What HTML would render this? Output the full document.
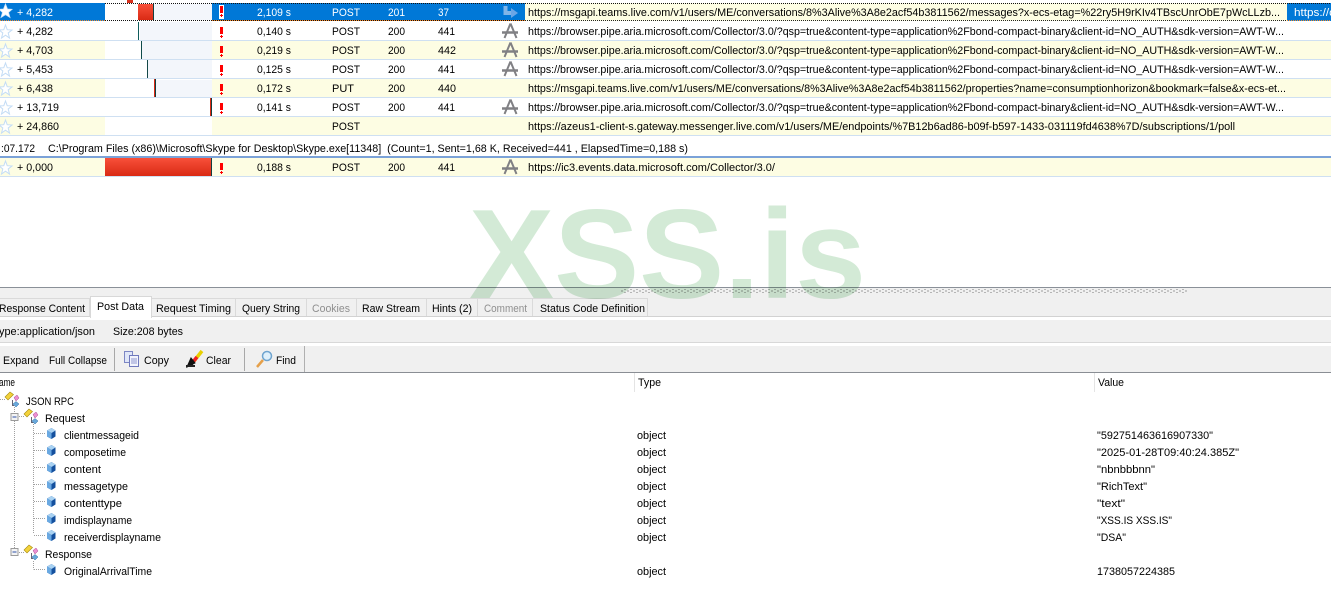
<!DOCTYPE html>
<html><head><meta charset="utf-8"><style>
html,body{margin:0;padding:0;background:#fff;width:1331px;height:603px;overflow:hidden}
svg{display:block;position:absolute;left:0;top:0}
text{font-family:"Liberation Sans",sans-serif;font-size:11px;fill:#000;white-space:pre}
.w text,text.w{fill:#fff}
.g{fill:#8f8f8f}
</style></head><body>
<svg width="1331" height="603" viewBox="0 0 1331 603" xmlns="http://www.w3.org/2000/svg">
<defs>
<linearGradient id="r" x1="0" y1="0" x2="0" y2="1"><stop offset="0" stop-color="#f8503a"/><stop offset="1" stop-color="#d92a14"/></linearGradient>
<polygon id="star" points="5.5,3 7.2,7.7 12,8 8.2,11 9.5,16 5.5,13.2 1.5,16 2.8,11 -1,8 3.8,7.7" fill="#fff" stroke="#c3dcf5" stroke-width="1"/>
<g id="ex"><rect x="220" y="5" width="3" height="7" fill="#f00"/><rect x="221" y="13" width="1" height="3" fill="#f00"/><rect x="220" y="14" width="3" height="1" fill="#f00"/></g>
<g id="a" fill="none" stroke="#808084"><path d="M510.500 1.500 L504.500 16" stroke-width="2"/><path d="M510.500 1.500 L516.500 16" stroke-width="2"/><path d="M502 10.500H518" stroke-width="2.500"/></g>
<g id="cube"><polygon points="51.500,0 55.500,2.500 55.500,8.500 51.500,11 47,8.500 47,2.500" fill="#14509e"/><polygon points="51.500,0 55.500,2.500 51.500,5 47,2.500" fill="#a9d2f2"/><polygon points="47,2.500 51.500,5 51.500,11 47,8.500" fill="#6aa9e2"/></g>
<g id="node"><path d="M7.500 8 V13.500 H9" fill="none" stroke="#667" stroke-width="1"/><polygon points="0,5 5,0 8.500,2.500 3,8" fill="#f3d23a" stroke="#a58a10" stroke-width=".6"/><polygon points="9,5.500 12,3 14,6 11,9" fill="#ec8fd2" stroke="#a84e92" stroke-width=".5"/><polygon points="8,12 11,9.500 14,12 11,15" fill="#69a9dc" stroke="#2c6ca5" stroke-width=".5"/></g>
<g id="minus"><rect x=".5" y=".5" width="7" height="7" fill="#f4f4f4" stroke="#9a9a9a"/><rect x="2" y="3.500" width="4" height="1" fill="#2b4fa8"/></g>
<pattern id="dither" width="6" height="4" patternUnits="userSpaceOnUse"><rect width="6" height="4" fill="#f0f0f0"/><rect x="0" y="0" width="2" height="2" fill="#b5b5b5"/><rect x="3" y="2" width="2" height="2" fill="#c6c6c6"/></pattern>
</defs>

<!-- top rows -->
<rect x="127" y="0" width="6" height="3" fill="#d9301c"/>
<rect x="0" y="3" width="105" height="18" fill="#0078d7"/><rect x="212" y="3" width="313" height="18" fill="#0078d7"/>
<rect x="105" y="3" width="107" height="18" fill="#fff"/>
<rect x="154" y="4" width="58" height="16" fill="#f3f6fb"/>
<rect x="138" y="4" width="15" height="16" fill="url(#r)"/><rect x="153" y="4" width="1" height="16" fill="#143f3f"/>
<rect x="525" y="3" width="762" height="18" fill="#fdfde3"/>
<rect x="1287" y="3" width="44" height="18" fill="#0078d7"/>
<path d="M105 3.500H1331M105 20.500H525" stroke="#111" stroke-width="1" stroke-dasharray="1 1"/>
<path d="M525 20.500H1287" stroke="#222" stroke-width="1" stroke-dasharray="1 1"/>
<path d="M0 20.500H105M212 20.500H525M1287 20.500H1331" stroke="#f58a2a" stroke-width="1" stroke-dasharray="1 1"/>

<rect x="0" y="41" width="1331" height="18" fill="#fdfde3"/><rect x="0" y="79" width="1331" height="18" fill="#fdfde3"/><rect x="0" y="117" width="1331" height="18" fill="#fdfde3"/><rect x="0" y="158" width="1331" height="18" fill="#fdfde3"/>
<rect x="105" y="41" width="107" height="18" fill="#fff"/><rect x="105" y="79" width="107" height="18" fill="#fff"/><rect x="105" y="117" width="107" height="18" fill="#fff"/>
<rect x="140" y="22" width="72" height="18" fill="#f3f6fb"/><rect x="142" y="41" width="70" height="18" fill="#f3f6fb"/><rect x="148" y="60" width="64" height="18" fill="#f3f6fb"/><rect x="156" y="80" width="56" height="17" fill="#f3f6fb"/>
<rect x="138" y="22" width="1" height="18" fill="#0f5c5c"/><rect x="141" y="41" width="1" height="18" fill="#0f4c4c"/><rect x="147" y="60" width="1" height="18" fill="#144848"/>
<rect x="154" y="79" width="1" height="18" fill="#d92a14"/><rect x="155" y="79" width="1" height="18" fill="#143f3f"/>
<rect x="210" y="98" width="1" height="18" fill="#d92a14"/><rect x="211" y="98" width="1" height="18" fill="#143f3f"/>
<rect x="105" y="158" width="106" height="18" fill="url(#r)"/><rect x="211" y="158" width="1" height="18" fill="#143f3f"/>

<path d="M0 40.500H1331M0 59.500H1331M0 78.500H1331M0 97.500H1331M0 116.500H1331M0 135.500H1331M0 176.500H1331" stroke="#cfe0f2" stroke-width="1"/>
<rect x="0" y="156" width="1331" height="2" fill="#7ba2d8"/>

<!-- stars -->
<g transform="translate(0,3)"><polygon points="5.500,1 7.500,6 12,6.300 8.500,9.500 10,14.500 5.500,11.700 1,14.500 2.500,9.500 -1,6.300 3.500,6" fill="#fff" stroke="#cfe6fb" stroke-width=".8"/></g>
<use href="#star" y="22"/><use href="#star" y="41"/><use href="#star" y="60"/><use href="#star" y="79"/><use href="#star" y="98"/><use href="#star" y="117"/><use href="#star" y="158"/>

<!-- exclamation -->
<rect x="219" y="5" width="5" height="14" fill="#fff"/><use href="#ex" y="1"/>
<use href="#ex" y="22"/><use href="#ex" y="41"/><use href="#ex" y="60"/><use href="#ex" y="79"/><use href="#ex" y="98"/><use href="#ex" y="158"/>

<!-- row icons -->
<g fill="none"><path d="M505.500 6 V13 H512" stroke="#7fb5e8" stroke-width="4"/><polygon points="511,8 518,13 511,18" fill="#6aa6e6"/></g>
<use href="#a" y="22"/><use href="#a" y="41"/><use href="#a" y="60"/><use href="#a" y="98"/><use href="#a" y="158"/>

<!-- row 1 text -->
<g class="w">
<text x="17" y="16" textLength="36" lengthAdjust="spacingAndGlyphs">+ 4,282</text>
<text x="257" y="16" textLength="34" lengthAdjust="spacingAndGlyphs">2,109 s</text>
<text x="332" y="16" textLength="28" lengthAdjust="spacingAndGlyphs">POST</text>
<text x="388" y="16" textLength="17" lengthAdjust="spacingAndGlyphs">201</text>
<text x="438" y="16" textLength="11" lengthAdjust="spacingAndGlyphs">37</text>
<text x="1294" y="16" textLength="41" lengthAdjust="spacingAndGlyphs">https://c</text>
</g>
<text x="528" y="16" textLength="752" lengthAdjust="spacingAndGlyphs">https://msgapi.teams.live.com/v1/users/ME/conversations/8%3Alive%3A8e2acf54b3811562/messages?x-ecs-etag=%22ry5H9rKIv4TBscUnrObE7pWcLLzb...</text>

<!-- row 2 -->
<text x="17" y="35" textLength="36" lengthAdjust="spacingAndGlyphs">+ 4,282</text><text x="257" y="35" textLength="34" lengthAdjust="spacingAndGlyphs">0,140 s</text><text x="332" y="35" textLength="28" lengthAdjust="spacingAndGlyphs">POST</text><text x="388" y="35" textLength="17" lengthAdjust="spacingAndGlyphs">200</text><text x="438" y="35" textLength="17" lengthAdjust="spacingAndGlyphs">441</text>
<text x="528" y="35" textLength="756" lengthAdjust="spacingAndGlyphs">https://browser.pipe.aria.microsoft.com/Collector/3.0/?qsp=true&amp;content-type=application%2Fbond-compact-binary&amp;client-id=NO_AUTH&amp;sdk-version=AWT-W...</text>
<!-- row 3 -->
<text x="17" y="54" textLength="36" lengthAdjust="spacingAndGlyphs">+ 4,703</text><text x="257" y="54" textLength="34" lengthAdjust="spacingAndGlyphs">0,219 s</text><text x="332" y="54" textLength="28" lengthAdjust="spacingAndGlyphs">POST</text><text x="388" y="54" textLength="17" lengthAdjust="spacingAndGlyphs">200</text><text x="438" y="54" textLength="18" lengthAdjust="spacingAndGlyphs">442</text>
<text x="528" y="54" textLength="756" lengthAdjust="spacingAndGlyphs">https://browser.pipe.aria.microsoft.com/Collector/3.0/?qsp=true&amp;content-type=application%2Fbond-compact-binary&amp;client-id=NO_AUTH&amp;sdk-version=AWT-W...</text>
<!-- row 4 -->
<text x="17" y="73" textLength="36" lengthAdjust="spacingAndGlyphs">+ 5,453</text><text x="257" y="73" textLength="34" lengthAdjust="spacingAndGlyphs">0,125 s</text><text x="332" y="73" textLength="28" lengthAdjust="spacingAndGlyphs">POST</text><text x="388" y="73" textLength="17" lengthAdjust="spacingAndGlyphs">200</text><text x="438" y="73" textLength="17" lengthAdjust="spacingAndGlyphs">441</text>
<text x="528" y="73" textLength="756" lengthAdjust="spacingAndGlyphs">https://browser.pipe.aria.microsoft.com/Collector/3.0/?qsp=true&amp;content-type=application%2Fbond-compact-binary&amp;client-id=NO_AUTH&amp;sdk-version=AWT-W...</text>
<!-- row 5 -->
<text x="17" y="92" textLength="36" lengthAdjust="spacingAndGlyphs">+ 6,438</text><text x="257" y="92" textLength="34" lengthAdjust="spacingAndGlyphs">0,172 s</text><text x="332" y="92" textLength="22" lengthAdjust="spacingAndGlyphs">PUT</text><text x="388" y="92" textLength="17" lengthAdjust="spacingAndGlyphs">200</text><text x="438" y="92" textLength="18" lengthAdjust="spacingAndGlyphs">440</text>
<text x="528" y="92" textLength="758" lengthAdjust="spacingAndGlyphs">https://msgapi.teams.live.com/v1/users/ME/conversations/8%3Alive%3A8e2acf54b3811562/properties?name=consumptionhorizon&amp;bookmark=false&amp;x-ecs-et...</text>
<!-- row 6 -->
<text x="17" y="111" textLength="42" lengthAdjust="spacingAndGlyphs">+ 13,719</text><text x="257" y="111" textLength="34" lengthAdjust="spacingAndGlyphs">0,141 s</text><text x="332" y="111" textLength="28" lengthAdjust="spacingAndGlyphs">POST</text><text x="388" y="111" textLength="17" lengthAdjust="spacingAndGlyphs">200</text><text x="438" y="111" textLength="17" lengthAdjust="spacingAndGlyphs">441</text>
<text x="528" y="111" textLength="756" lengthAdjust="spacingAndGlyphs">https://browser.pipe.aria.microsoft.com/Collector/3.0/?qsp=true&amp;content-type=application%2Fbond-compact-binary&amp;client-id=NO_AUTH&amp;sdk-version=AWT-W...</text>
<!-- row 7 -->
<text x="17" y="130" textLength="42" lengthAdjust="spacingAndGlyphs">+ 24,860</text><text x="332" y="130" textLength="28" lengthAdjust="spacingAndGlyphs">POST</text>
<text x="528" y="130" textLength="707" lengthAdjust="spacingAndGlyphs">https://azeus1-client-s.gateway.messenger.live.com/v1/users/ME/endpoints/%7B12b6ad86-b09f-b597-1433-031119fd4638%7D/subscriptions/1/poll</text>
<!-- status -->
<text x="1" y="152" textLength="34" lengthAdjust="spacingAndGlyphs">:07.172</text>
<text x="48" y="152" textLength="640" lengthAdjust="spacingAndGlyphs">C:\Program Files (x86)\Microsoft\Skype for Desktop\Skype.exe[11348]  (Count=1, Sent=1,68 K, Received=441 , ElapsedTime=0,188 s)</text>
<!-- row 8 -->
<text x="17" y="171" textLength="36" lengthAdjust="spacingAndGlyphs">+ 0,000</text><text x="257" y="171" textLength="34" lengthAdjust="spacingAndGlyphs">0,188 s</text><text x="332" y="171" textLength="28" lengthAdjust="spacingAndGlyphs">POST</text><text x="388" y="171" textLength="17" lengthAdjust="spacingAndGlyphs">200</text><text x="438" y="171" textLength="17" lengthAdjust="spacingAndGlyphs">441</text>
<text x="528" y="171" textLength="247" lengthAdjust="spacingAndGlyphs">https://ic3.events.data.microsoft.com/Collector/3.0/</text>

<!-- bottom panel -->
<rect x="0" y="287" width="1331" height="86" fill="#f0f0f0"/>
<rect x="0" y="287" width="1331" height="1" fill="#8a9098"/>
<rect x="620" y="289" width="567" height="4" fill="url(#dither)"/>
<rect x="0" y="316" width="1331" height="1" fill="#d2d2d2"/>
<rect x="0" y="317" width="1331" height="3" fill="#fff"/>
<rect x="0" y="342" width="1331" height="1" fill="#d8d8d8"/><rect x="0" y="343" width="1331" height="3" fill="#fff"/>
<rect x="0" y="372" width="1331" height="1" fill="#8a8e94"/>

<!-- tabs -->
<path d="M0 298.500H647.500V316M235.500 299V316M306.500 299V316M356.500 299V316M426.500 299V316M477.500 299V316M532.500 299V316M89.500 299V316" fill="none" stroke="#dadada"/>
<rect x="90" y="296" width="61" height="22" fill="#fff"/><path d="M90.500 318V296.500H151.500V318" fill="none" stroke="#d8d8d8"/>
<text x="-1" y="312" textLength="86" lengthAdjust="spacingAndGlyphs">Response Content</text>
<text x="97" y="310" textLength="47" lengthAdjust="spacingAndGlyphs">Post Data</text>
<text x="156" y="312" textLength="75" lengthAdjust="spacingAndGlyphs">Request Timing</text>
<text x="242" y="312" textLength="58" lengthAdjust="spacingAndGlyphs">Query String</text>
<text x="312" y="312" textLength="38" lengthAdjust="spacingAndGlyphs" class="g">Cookies</text>
<text x="362" y="312" textLength="58" lengthAdjust="spacingAndGlyphs">Raw Stream</text>
<text x="432" y="312" textLength="40" lengthAdjust="spacingAndGlyphs">Hints (2)</text>
<text x="484" y="312" textLength="43" lengthAdjust="spacingAndGlyphs" class="g">Comment</text>
<text x="540" y="312" textLength="105" lengthAdjust="spacingAndGlyphs">Status Code Definition</text>

<!-- info -->
<text x="-1" y="335" textLength="96" lengthAdjust="spacingAndGlyphs">ype:application/json</text>
<text x="113" y="335" textLength="70" lengthAdjust="spacingAndGlyphs">Size:208 bytes</text>

<!-- toolbar -->
<text x="3" y="364" textLength="36" lengthAdjust="spacingAndGlyphs">Expand</text>
<text x="49" y="364" textLength="58" lengthAdjust="spacingAndGlyphs">Full Collapse</text>
<rect x="114" y="348" width="1" height="23" fill="#a8a8a8"/>
<rect x="244" y="348" width="1" height="23" fill="#a8a8a8"/>
<rect x="304" y="346" width="1" height="26" fill="#b0b0b0"/>
<text x="144" y="364" textLength="25" lengthAdjust="spacingAndGlyphs">Copy</text>
<text x="206" y="364" textLength="25" lengthAdjust="spacingAndGlyphs">Clear</text>
<text x="276" y="364" textLength="20" lengthAdjust="spacingAndGlyphs">Find</text>
<!-- copy icon -->
<rect x="124.500" y="351.500" width="8" height="11" fill="#dfe6f8" stroke="#7c86c4"/>
<rect x="129.500" y="355.500" width="9" height="11" fill="#f2f4fd" stroke="#6f79bd"/>
<path d="M131 359H137M131 361H137M131 363H137" stroke="#8d96cf"/>
<!-- clear icon -->
<path d="M194 361 L202 351" stroke="#e8d000" stroke-width="3.500"/>
<path d="M193 362 L197 357" stroke="#e22" stroke-width="3.500"/>
<path d="M187 367 L191 358 L195 363 Z M193 366 L190 360" fill="#111" stroke="#111"/>
<rect x="186" y="365" width="9" height="2" fill="#222"/>
<!-- find icon -->
<circle cx="267" cy="356" r="4.500" fill="#dff0fb" stroke="#6fa4cf" stroke-width="1.500"/>
<path d="M263 360 L257 367" stroke="#e5a04a" stroke-width="2.500"/>

<!-- header -->
<text x="-1" y="386" textLength="16" lengthAdjust="spacingAndGlyphs">ame</text>
<text x="638" y="386" textLength="23" lengthAdjust="spacingAndGlyphs">Type</text>
<text x="1098" y="386" textLength="26" lengthAdjust="spacingAndGlyphs">Value</text>
<rect x="634" y="373" width="1" height="19" fill="#e4e4e4"/><rect x="1094" y="373" width="1" height="19" fill="#e4e4e4"/>

<!-- tree lines -->
<path d="M0 399.500H5M14.500 407V413M14.500 421V548M19 416.500H24M19 552.500H24M33.500 422V533.500M34 433.500H46M34 450.500H46M34 467.500H46M34 484.500H46M34 501.500H46M34 518.500H46M34 535.500H46M33.500 561V569.500M34 569.500H46" stroke="#a0a0a0" stroke-dasharray="1 1" fill="none"/>
<use href="#node" x="5" y="392"/>
<use href="#minus" x="10.500" y="413"/><use href="#minus" x="10.500" y="548"/>
<use href="#node" x="24" y="409"/><use href="#node" x="24" y="545"/>
<use href="#cube" y="428"/><use href="#cube" y="445"/><use href="#cube" y="462"/><use href="#cube" y="479"/><use href="#cube" y="496"/><use href="#cube" y="513"/><use href="#cube" y="530"/><use href="#cube" y="564"/>

<text x="26" y="405" textLength="48" lengthAdjust="spacingAndGlyphs">JSON RPC</text>
<text x="45" y="422" textLength="40" lengthAdjust="spacingAndGlyphs">Request</text>
<text x="64" y="439" textLength="75" lengthAdjust="spacingAndGlyphs">clientmessageid</text>
<text x="64" y="456" textLength="62" lengthAdjust="spacingAndGlyphs">composetime</text>
<text x="64" y="473" textLength="37" lengthAdjust="spacingAndGlyphs">content</text>
<text x="64" y="490" textLength="64" lengthAdjust="spacingAndGlyphs">messagetype</text>
<text x="64" y="507" textLength="58" lengthAdjust="spacingAndGlyphs">contenttype</text>
<text x="64" y="524" textLength="68" lengthAdjust="spacingAndGlyphs">imdisplayname</text>
<text x="64" y="541" textLength="97" lengthAdjust="spacingAndGlyphs">receiverdisplayname</text>
<text x="45" y="558" textLength="47" lengthAdjust="spacingAndGlyphs">Response</text>
<text x="64" y="575" textLength="88" lengthAdjust="spacingAndGlyphs">OriginalArrivalTime</text>

<text x="637" y="439" textLength="29" lengthAdjust="spacingAndGlyphs">object</text>
<text x="637" y="456" textLength="29" lengthAdjust="spacingAndGlyphs">object</text>
<text x="637" y="473" textLength="29" lengthAdjust="spacingAndGlyphs">object</text>
<text x="637" y="490" textLength="29" lengthAdjust="spacingAndGlyphs">object</text>
<text x="637" y="507" textLength="29" lengthAdjust="spacingAndGlyphs">object</text>
<text x="637" y="524" textLength="29" lengthAdjust="spacingAndGlyphs">object</text>
<text x="637" y="541" textLength="29" lengthAdjust="spacingAndGlyphs">object</text>
<text x="637" y="575" textLength="29" lengthAdjust="spacingAndGlyphs">object</text>

<text x="1097" y="439" textLength="116" lengthAdjust="spacingAndGlyphs">"592751463616907330"</text>
<text x="1097" y="456" textLength="142" lengthAdjust="spacingAndGlyphs">"2025-01-28T09:40:24.385Z"</text>
<text x="1097" y="473" textLength="58" lengthAdjust="spacingAndGlyphs">"nbnbbbnn"</text>
<text x="1097" y="490" textLength="50" lengthAdjust="spacingAndGlyphs">"RichText"</text>
<text x="1097" y="507" textLength="28" lengthAdjust="spacingAndGlyphs">"text"</text>
<text x="1097" y="524" textLength="75" lengthAdjust="spacingAndGlyphs">"XSS.IS XSS.IS"</text>
<text x="1097" y="541" textLength="29" lengthAdjust="spacingAndGlyphs">"DSA"</text>
<text x="1097" y="575" textLength="78" lengthAdjust="spacingAndGlyphs">1738057224385</text>

<!-- watermark -->
<text x="469" y="298" textLength="397" lengthAdjust="spacingAndGlyphs" style="font-size:127px;font-weight:bold;fill:#d3ead6;mix-blend-mode:multiply">XSS.is</text>
</svg>
</body></html>
